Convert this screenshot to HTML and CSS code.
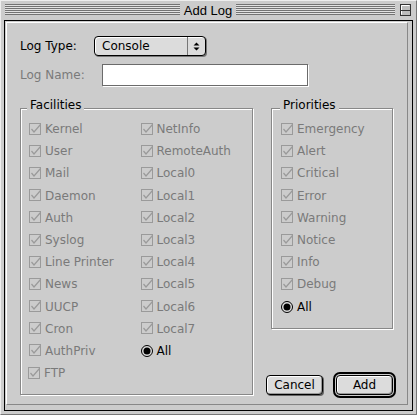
FILE: index.html
```html
<!DOCTYPE html>
<html lang="en">
<head>
  <meta charset="UTF-8">
  <meta name="viewport" content="width=device-width, initial-scale=1.0">
  <title>Add Log</title>
  <link rel="stylesheet" href="styles.css">
</head>
<body>

  <div class="window">
    <div class="titlebar">
      <div class="stripes stripes-left"></div>
      <div class="title">Add Log</div>
      <div class="stripes stripes-right"></div>
      <svg class="zoombox" width="11" height="12" viewBox="0 0 11 12">
        <rect x="0.5" y="0.5" width="10" height="11" fill="#bdbdbd" stroke="#333"/>
        <path d="M1.5 10.5 V1.5 H9.5" fill="none" stroke="#fff"/>
        <path d="M1 6.5 H10" stroke="#333"/>
      </svg>
    </div>

    <div class="content">
      <div class="panel">
        <div class="field">
          <span class="label">Log Type:</span>
          <div class="popup">
            <span class="popup-text">Console</span>
            <span class="arrows">
              <svg width="7" height="9" viewBox="0 0 7 9">
                <path d="M3.5 0.5 L6.5 3.5 H0.5 Z M0.5 5.5 H6.5 L3.5 8.5 Z" fill="#000"/>
              </svg>
            </span>
          </div>
        </div>

        <div class="field field-name">
          <span class="label disabled">Log Name:</span>
          <input class="textbox" type="text">
        </div>

        <div class="groups">
          <div class="group facilities">
            <span class="group-title">Facilities</span>
            <div class="col">
              <div class="opt"><svg class="box"><use href="#chk"/></svg><span>Kernel</span></div>
              <div class="opt"><svg class="box"><use href="#chk"/></svg><span>User</span></div>
              <div class="opt"><svg class="box"><use href="#chk"/></svg><span>Mail</span></div>
              <div class="opt"><svg class="box"><use href="#chk"/></svg><span>Daemon</span></div>
              <div class="opt"><svg class="box"><use href="#chk"/></svg><span>Auth</span></div>
              <div class="opt"><svg class="box"><use href="#chk"/></svg><span>Syslog</span></div>
              <div class="opt"><svg class="box"><use href="#chk"/></svg><span>Line Printer</span></div>
              <div class="opt"><svg class="box"><use href="#chk"/></svg><span>News</span></div>
              <div class="opt"><svg class="box"><use href="#chk"/></svg><span>UUCP</span></div>
              <div class="opt"><svg class="box"><use href="#chk"/></svg><span>Cron</span></div>
              <div class="opt"><svg class="box"><use href="#chk"/></svg><span>AuthPriv</span></div>
              <div class="opt ftp"><svg class="box"><use href="#chk"/></svg><span>FTP</span></div>
            </div>
            <div class="col">
              <div class="opt"><svg class="box"><use href="#chk"/></svg><span>NetInfo</span></div>
              <div class="opt"><svg class="box"><use href="#chk"/></svg><span>RemoteAuth</span></div>
              <div class="opt"><svg class="box"><use href="#chk"/></svg><span>Local0</span></div>
              <div class="opt"><svg class="box"><use href="#chk"/></svg><span>Local1</span></div>
              <div class="opt"><svg class="box"><use href="#chk"/></svg><span>Local2</span></div>
              <div class="opt"><svg class="box"><use href="#chk"/></svg><span>Local3</span></div>
              <div class="opt"><svg class="box"><use href="#chk"/></svg><span>Local4</span></div>
              <div class="opt"><svg class="box"><use href="#chk"/></svg><span>Local5</span></div>
              <div class="opt"><svg class="box"><use href="#chk"/></svg><span>Local6</span></div>
              <div class="opt"><svg class="box"><use href="#chk"/></svg><span>Local7</span></div>
              <div class="opt on"><svg class="radio"><use href="#radio"/></svg><span>All</span></div>
            </div>
          </div>

          <div class="side">
            <div class="group priorities">
              <span class="group-title">Priorities</span>
              <div class="opt"><svg class="box"><use href="#chk"/></svg><span>Emergency</span></div>
              <div class="opt"><svg class="box"><use href="#chk"/></svg><span>Alert</span></div>
              <div class="opt"><svg class="box"><use href="#chk"/></svg><span>Critical</span></div>
              <div class="opt"><svg class="box"><use href="#chk"/></svg><span>Error</span></div>
              <div class="opt"><svg class="box"><use href="#chk"/></svg><span>Warning</span></div>
              <div class="opt"><svg class="box"><use href="#chk"/></svg><span>Notice</span></div>
              <div class="opt"><svg class="box"><use href="#chk"/></svg><span>Info</span></div>
              <div class="opt"><svg class="box"><use href="#chk"/></svg><span>Debug</span></div>
              <div class="opt on"><svg class="radio"><use href="#radio"/></svg><span>All</span></div>
            </div>

            <div class="buttons">
              <button class="btn cancel" type="button">Cancel</button>
              <button class="btn add" type="button">Add</button>
            </div>
          </div>
        </div>
      </div>
    </div>
  </div>

  <svg class="defs" width="0" height="0">
    <symbol id="chk" viewBox="0 0 13 13">
      <rect x="0.5" y="0.5" width="11" height="11" fill="none" stroke="#9a9a9a"/>
      <path d="M2.5 6 L5 9 L11.5 1.5" fill="none" stroke="#9a9a9a" stroke-width="1.2"/>
    </symbol>
    <symbol id="radio" viewBox="0 0 12 12">
      <circle cx="6" cy="6" r="5.5" fill="#ddd" stroke="#000"/>
      <circle cx="6" cy="6" r="3.5" fill="#000"/>
    </symbol>
  </svg>

</body>
</html>
```

FILE: styles.css
```css
body {
  margin: 0;
  font-family: "DejaVu Sans", sans-serif;
  font-size: 12px;
  color: #000;
  background-color: #ccc;
}

.defs {
  position: absolute;
  width: 0;
  height: 0;
  overflow: hidden;
}

.window {
  width: 417px;
  height: 415px;
  box-sizing: border-box;
  display: flex;
  flex-direction: column;
  padding: 0 3px 3px 3px;
  border: 1px solid;
  border-color: #eee #777 #777 #eee;
  background-color: #ccc;
}

/* title bar */
.titlebar {
  flex: none;
  height: 19px;
  display: flex;
  align-items: flex-start;
  padding: 0 2px 0 1px;
}

.stripes {
  position: relative;
  z-index: 1;
  min-width: 0;
  height: 11px;
  margin-top: 3px;
  background-image: repeating-linear-gradient(to bottom, #737373 0px, #737373 1px, #e2e2e2 1px, #e2e2e2 2px);
}

.stripes-left {
  flex: 1 1 16px;
}

.stripes-right {
  flex: 1 1 0;
}

.title {
  flex: none;
  padding: 0 4px;
  font-family: "Liberation Sans", sans-serif;
  font-size: 13px;
  line-height: 19px;
}

.zoombox {
  flex: none;
  margin: 3px 0 0 5px;
}

/* content */
.content {
  flex: 1;
  display: flex;
  border: 1px solid #000;
}

.panel {
  flex: 1;
  margin: 1px 4px 5px 1px;
  padding: 13px 0 0 13px;
  border: 1px solid;
  border-color: #fff #888 #888 #fff;
}

.field {
  display: flex;
  align-items: center;
  line-height: 14px;
}

.label {
  width: 74px;
}

.disabled {
  color: #7a7a7a;
}

.popup {
  width: 112px;
  height: 20px;
  box-sizing: border-box;
  display: flex;
  align-items: center;
  border: 1px solid #000;
  border-radius: 4px;
  background-color: #dcdcdc;
  box-shadow: inset 1px 1px 0 #fff, 1px 1px 0 #777;
}

.popup-text {
  flex: 1;
  padding-left: 7px;
}

.arrows {
  width: 18px;
  height: 100%;
  box-sizing: border-box;
  display: flex;
  align-items: center;
  justify-content: center;
  border-left: 1px solid #777;
}

.field-name {
  margin-top: 8px;
}

.field-name .label {
  width: 82px;
}

.textbox {
  width: 206px;
  height: 22px;
  box-sizing: border-box;
  margin: 0;
  padding: 0 3px;
  border: 1px solid #6b6b6b;
  background-color: #fff;
  box-shadow: 1px 1px 0 #fff;
  outline: none;
}

/* groups */
.groups {
  display: flex;
  margin-top: 22px;
}

.group {
  position: relative;
  box-sizing: border-box;
  padding: 9px 0 10px;
  border: 1px solid #888;
  box-shadow: inset 1px 1px 0 #fff, 1px 1px 0 #fff;
}

.group-title {
  position: absolute;
  top: -11px;
  left: 6px;
  padding: 0 3px;
  line-height: 14px;
  background-color: #ccc;
}

.priorities .group-title {
  left: 8px;
}

.facilities {
  width: 233px;
  display: flex;
  padding-left: 8px;
}

.col {
  width: 117px;
}

.side {
  display: flex;
  flex-direction: column;
  margin-left: 13px;
}

.priorities {
  width: 122px;
  margin-left: 5px;
  padding-left: 9px;
}

.opt {
  height: 22.2px;
  display: flex;
  align-items: center;
  line-height: 14px;
  color: #7a7a7a;
  white-space: nowrap;
}

.opt .box {
  width: 13px;
  height: 13px;
  margin-right: 3px;
}

.opt .radio {
  width: 12px;
  height: 12px;
  margin-right: 4px;
}

.opt.on {
  color: #000;
}

.ftp {
  margin-left: -1px;
}

/* buttons */
.buttons {
  display: flex;
  margin-top: auto;
}

.btn {
  height: 20px;
  box-sizing: border-box;
  padding: 0;
  border: 1px solid #000;
  border-radius: 4px;
  background-color: #dcdcdc;
  font-family: "DejaVu Sans", sans-serif;
  font-size: 12px;
  color: #000;
  box-shadow: inset 1px 1px 0 #fff, inset -1px -1px 0 #999, 1px 1px 0 #666;
}

.cancel {
  width: 57px;
}

.add {
  width: 57px;
  margin-left: 13px;
  box-shadow: inset 1px 1px 0 #fff, inset -1px -1px 0 #999, 0 0 0 1px #ccc, 0 0 0 3px #000;
}
```
